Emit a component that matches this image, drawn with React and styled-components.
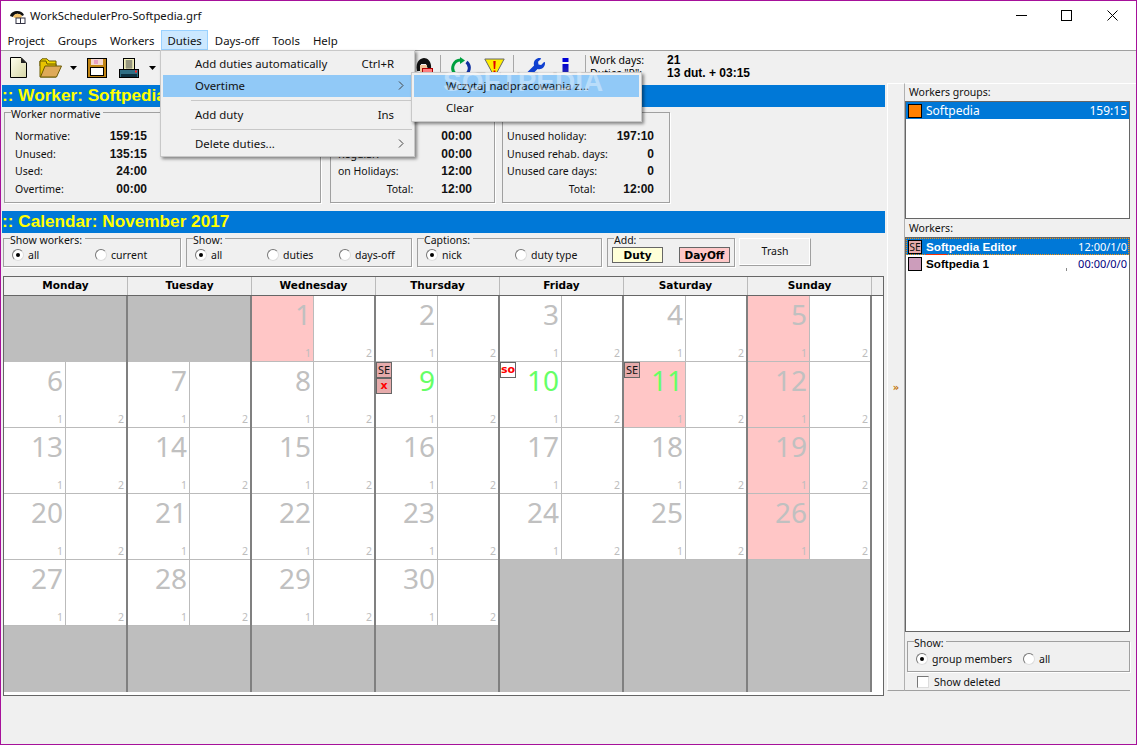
import React from "react";
import styled, { createGlobalStyle } from "styled-components";
import { FaWrench } from "react-icons/fa";

const GlobalStyle = createGlobalStyle`
  html, body {
    margin: 0;
    padding: 0;
    background: #f0f0f0;
  }
  body {
    font-family: "Noto Sans", "Open Sans", sans-serif;
    font-size: 10.5px;
    color: #000;
  }
`;

const Window = styled.div`
  position: relative;
  box-sizing: border-box;
  width: 1137px;
  height: 745px;
  border: 1px solid #a6119a;
  background: #f0f0f0;
  overflow: hidden;
  display: flex;
  flex-direction: column;
`;

const TitleBar = styled.div`
  height: 29px;
  background: #fff;
  display: flex;
  align-items: center;
  padding-left: 8px;
  font-size: 11.3px;
  flex: none;

  span {
    margin-left: 3px;
    flex: 1;
    color: #111;
  }
`;

const WinButtons = styled.div`
  display: flex;
  height: 100%;
  padding-right: 1px;
`;

const WinButton = styled.div`
  width: 45.5px;
  display: flex;
  align-items: center;
  justify-content: center;
  margin-top: -1px;
`;

const MenuBar = styled.div`
  height: 21px;
  background: #fff;
  display: flex;
  flex: none;
  border-bottom: 1px solid #a0a0a0;
  box-sizing: border-box;
  position: relative;
  z-index: 5;
`;

const MenuTitle = styled.div`
  position: relative;
  box-sizing: border-box;
  height: 20px;
  padding: 0 5.5px;
  font-size: 11.4px;
  line-height: 19px;
  color: #111;
  border: 1px solid ${p => (p.$open ? "#99d1ff" : "transparent")};
  background: ${p => (p.$open ? "#cce8ff" : "transparent")};
`;

const Dropdown = styled.div`
  position: absolute;
  box-sizing: border-box;
  top: 19px;
  left: -2px;
  width: 255px;
  height: 107px;
  padding: 2px;
  background: #f0f0f0;
  border: 1px solid #c8c8c8;
  box-shadow: 2px 2px 3px rgba(0, 0, 0, 0.45);
  z-index: 10;
`;

const SubMenu = styled(Dropdown)`
  top: -3px;
  left: 248px;
  width: 231px;
  height: 50px;
`;

const DropItem = styled.div`
  position: relative;
  box-sizing: border-box;
  display: flex;
  align-items: center;
  height: 22px;
  padding: 0 0 2px 32px;
  font-size: 11.4px;
  color: #111;
  background: ${p => (p.$active ? "#91c9f7" : "transparent")};

  b {
    flex: 1;
    font-weight: 400;
  }
`;

const ArrowSlot = styled.i`
  width: 18px;
  display: flex;
  padding-left: 4px;
  box-sizing: border-box;
`;

const DropLine = styled.div`
  height: 1px;
  margin: 3px 0 3px 28px;
  background: #c8c8c8;
`;

const Toolbar = styled.div`
  height: 33px;
  flex: none;
  display: flex;
  align-items: center;
  padding-left: 7px;
  position: relative;
`;

const ToolSlot = styled.div`
  width: ${p => p.$w}px;
  margin-left: ${p => p.$gap || 0}px;
  height: 22px;
  display: flex;
  align-items: center;
  justify-content: center;
  flex: none;
`;

const ToolSep = styled.div`
  width: 1px;
  height: 26px;
  background: #a8a8a8;
  margin-left: ${p => p.$gap}px;
  flex: none;
`;

const ToolStats = styled.div`
  margin: 3px 0 0 4px;
  align-self: flex-start;
  display: grid;
  grid-template-columns: 77px auto;
  grid-auto-rows: 13px;
  line-height: 13px;
`;

const Bold = styled.span`
  font-family: "DejaVu Sans", sans-serif;
  font-weight: 700;
  font-size: 10.5px;
`;

const Value = styled.span`
  font-family: "Liberation Sans", sans-serif;
  font-weight: 700;
  font-size: 12px;
`;

const Main = styled.div`
  flex: 1;
  display: flex;
  align-items: flex-start;
  min-height: 0;
`;

const LeftPane = styled.div`
  width: 884px;
  padding-left: 1px;
  box-sizing: border-box;
  flex: none;
`;

const BlueBar = styled.div`
  height: 22px;
  margin-top: ${p => p.$top}px;
  background: #0078d7;
  color: #ffff00;
  font-family: "Liberation Sans", sans-serif;
  font-weight: 700;
  font-size: 17.2px;
  line-height: 20px;
  white-space: nowrap;
  overflow: hidden;
`;

const PanelRow = styled.div`
  display: flex;
  margin: 5px 0 0 2px;
`;

const GroupBox = styled.div`
  position: relative;
  box-sizing: border-box;
  width: ${p => p.$w}px;
  height: ${p => p.$h}px;
  margin-left: ${p => p.$gap || 0}px;
  border: 1px solid #a0a0a0;
  box-shadow: 1px 1px 0 #fff;
  flex: none;
`;

const Legend = styled.span`
  position: absolute;
  top: -6px;
  left: 6px;
  padding-right: 3px;
  background: #f0f0f0;
  line-height: 14px;
  color: #111;
`;

const StatList = styled.div`
  padding: 15px ${p => p.$right}px 0 ${p => p.$left}px;
`;

const StatRow = styled.div`
  display: flex;
  justify-content: ${p => (p.$total ? "flex-end" : "space-between")};
  gap: ${p => (p.$total ? "28px" : "0")};
  height: 17.7px;
  line-height: 17.7px;
  color: #111;
`;

const FilterRow = styled.div`
  display: flex;
  margin: 5px 0 0 1px;
  align-items: flex-start;
`;

const FilterBody = styled.div`
  display: flex;
  align-items: center;
  padding: ${p => p.$top || 8}px 0 0 ${p => p.$left || 8}px;
`;

const RadioLabel = styled.label`
  display: flex;
  align-items: center;
  width: ${p => p.$w}px;
  height: 16px;
  color: #111;
  flex: none;
  gap: 4px;
`;

const RadioMark = styled.span`
  box-sizing: border-box;
  width: 12px;
  height: 12px;
  border-radius: 50%;
  background: #fff;
  border: 1px solid;
  border-color: #777 #ddd #ddd #777;
  display: flex;
  align-items: center;
  justify-content: center;
  flex: none;

  &::after {
    content: "";
    width: 4px;
    height: 4px;
    border-radius: 50%;
    background: ${p => (p.$on ? "#000" : "transparent")};
  }
`;

const AddChip = styled.div`
  box-sizing: border-box;
  width: 51px;
  height: 16px;
  margin-right: ${p => p.$gap || 0}px;
  border: 1px solid #666;
  background: ${p => p.$bg};
  text-align: center;
  line-height: 14px;
  flex: none;
`;

const TrashButton = styled.button`
  box-sizing: border-box;
  width: 72px;
  height: 28px;
  margin-left: 4px;
  padding: 0 0 2px;
  background: #f0f0f0;
  font: inherit;
  color: #111;
  border: 1px solid;
  border-color: #fff #a0a0a0 #a0a0a0 #fff;
  box-shadow: -1px -1px 0 #fff inset;
  flex: none;
`;

const Calendar = styled.div`
  box-sizing: border-box;
  width: 881px;
  height: 420px;
  margin: 9px 0 0 1px;
  border: 1px solid #666;
  background: #fff;
`;

const HeaderRow = styled.div`
  display: flex;
  height: 19px;
  background: #f0f0f0;
  border-bottom: 1px solid #666;
  box-sizing: border-box;
`;

const HeaderCell = styled.div`
  box-sizing: border-box;
  width: 124px;
  border-right: 1px solid #bbb;
  text-align: center;
  line-height: 17px;
  flex: none;
`;

const WeekRow = styled.div`
  display: grid;
  grid-template-columns: repeat(7, 124px);
  height: 66px;
`;

const DayCell = styled.div`
  position: relative;
  box-sizing: border-box;
  display: flex;
  border-right: 2px solid #808080;
  background: ${p => (p.$empty ? "#bebebe" : "#fff")};
`;

const HalfDay = styled.div`
  box-sizing: border-box;
  width: ${p => p.$w}px;
  display: flex;
  flex-direction: column;
  align-items: flex-end;
  justify-content: space-between;
  padding-right: 2px;
  background: ${p => (p.$off ? "#ffc6c6" : "transparent")};
  border-right: ${p => (p.$divider ? "1px solid #bbb" : "0")};
  border-bottom: 1px solid #bbb;
`;

const DayNumber = styled.div`
  font-size: 28px;
  line-height: 30px;
  margin-top: 3px;
  color: ${p => (p.$today ? "#66ff66" : "#c0c0c0")};
`;

const Slot = styled.div`
  font-size: 10.5px;
  line-height: 13px;
  margin-bottom: 1px;
  color: #bdbdbd;
  margin-left: auto;
`;

const ChipStack = styled.div`
  position: absolute;
  top: 0;
  left: 0;
  display: flex;
  flex-direction: column;
`;

const Chip = styled.div`
  box-sizing: border-box;
  width: 16px;
  height: 16px;
  border: 1px solid #666;
  background: ${p => (p.$white ? "#fff" : "#e6abab")};
  text-align: center;
  line-height: 14px;
  font-size: 11px;
  color: ${p => (p.$red ? "#ff0000" : "#111")};
  font-family: ${p => (p.$red ? '"DejaVu Sans", sans-serif' : "inherit")};
  font-weight: ${p => (p.$red ? 700 : 400)};
`;

const Splitter = styled.div`
  box-sizing: border-box;
  width: 18px;
  height: 608px;
  margin-left: 2px;
  margin-top: -1px;
  border-top: 1px solid #fff;
  border-left: 1px solid #fff;
  border-right: 1px solid #b0b0b0;
  border-bottom: 1px solid #a0a0a0;
  display: flex;
  align-items: center;
  justify-content: center;
  color: #c07000;
  font-family: "DejaVu Sans", sans-serif;
  font-weight: 700;
  font-size: 10px;
  flex: none;
`;

const RightPane = styled.div`
  box-sizing: border-box;
  width: 232px;
  height: 608px;
  margin-top: -1px;
  border-top: 1px solid #fff;
  padding: 1px 7px 0 0;
  display: flex;
  flex-direction: column;
  position: relative;
  flex: none;

  &::after {
    content: "";
    position: absolute;
    left: 0;
    bottom: 0;
    width: 225px;
    height: 1px;
    background: #a0a0a0;
  }
`;

const ListLabel = styled.div`
  height: ${p => p.$h}px;
  line-height: 14px;
  padding: ${p => p.$top}px 0 0 4px;
  box-sizing: border-box;
  color: #111;
`;

const ListBox = styled.div`
  box-sizing: border-box;
  height: ${p => (p.$h ? `${p.$h}px` : "auto")};
  flex: ${p => (p.$h ? "none" : "1")};
  border: 1px solid #666;
  background: #fff;
`;

const ListRow = styled.div`
  position: relative;
  box-sizing: border-box;
  height: 17px;
  display: flex;
  align-items: center;
  padding: 0 2px 0 2px;
  gap: 4px;
  background: ${p => (p.$sel ? "#0078d7" : "transparent")};
  color: ${p => (p.$sel ? "#fff" : "#000")};
  outline: ${p => (p.$focus ? "1px dotted #ff9000" : "none")};
  outline-offset: -1px;

  strong {
    flex: 1;
    font-weight: ${p => (p.$plain ? 400 : 700)};
    font-family: ${p => (p.$plain ? "inherit" : '"Liberation Sans", sans-serif')};
    font-size: ${p => (p.$plain ? "12px" : "11.7px")};
  }

  em {
    font-style: normal;
    font-size: ${p => (p.$plain ? "12px" : "11px")};
    color: ${p => p.$timeColor || "inherit"};
  }
`;

const Swatch = styled.span`
  box-sizing: border-box;
  width: 14px;
  height: 14px;
  border: 1px solid #000;
  background: ${p => p.$color};
  color: #111;
  font-size: 10.5px;
  line-height: 12px;
  text-align: center;
  overflow: hidden;
  flex: none;
`;

const Squiggle = styled.span`
  position: absolute;
  left: 20px;
  bottom: 0;
  width: 21px;
  height: 1px;
  background: #ff3000;
`;

const Tick = styled.span`
  position: absolute;
  left: 160px;
  bottom: 1px;
  width: 1px;
  height: 3px;
  background: #888;
`;

const ShowBox = styled(GroupBox)`
  margin: 9px 0 0 2px;
`;

const CheckRow = styled.label`
  display: flex;
  align-items: center;
  gap: 5px;
  height: 19px;
  margin: 0 0 0 12px;
  color: #111;
  flex: none;
`;

const CheckMark = styled.span`
  box-sizing: border-box;
  width: 12px;
  height: 12px;
  background: #fff;
  border: 1px solid;
  border-color: #777 #ddd #ddd #777;
`;

const Watermark = styled.div`
  position: absolute;
  top: 65px;
  left: 442px;
  font-family: "Liberation Sans", sans-serif;
  font-weight: 700;
  font-size: 28px;
  color: rgba(255, 255, 255, 0.38);
  pointer-events: none;
  z-index: 20;
`;

const Chevron = () => (
  <svg width="6" height="9" viewBox="0 0 6 9">
    <path d="M1 .5 5 4.5 1 8.5" fill="none" stroke="#444" />
  </svg>
);

const Caret = () => (
  <svg width="7" height="4" viewBox="0 0 7 4">
    <path d="M0 0H7L3.5 4Z" fill="#000" />
  </svg>
);

const AppIcon = () => (
  <svg width="18" height="16" viewBox="0 0 18 16">
    <path d="M1 8C2 2 13 1 15 7L13 8C10 5 6 5 4 9Z" fill="#111" />
    <path d="M4 9C6 5 10 5 13 8L12 10H6Z" fill="#f4c36a" />
    <rect x="7" y="10" width="9" height="5.5" fill="#fff" stroke="#334" />
    <path d="M11.5 10v5.5" stroke="#334" />
  </svg>
);

const DocIcon = () => (
  <svg width="17" height="21" viewBox="0 0 17 21">
    <defs>
      <linearGradient id="docFill" x1="0" y1="0" x2="1" y2="1">
        <stop offset="0" stopColor="#ffffee" />
        <stop offset="1" stopColor="#d6d6a6" />
      </linearGradient>
    </defs>
    <path d="M.5.5H11L16.5 6V20.5H.5Z" fill="url(#docFill)" stroke="#000" />
    <path d="M11 .5 16.5 6H11Z" fill="#222" />
  </svg>
);

const FolderIcon = () => (
  <svg width="23" height="20" viewBox="0 0 23 20">
    <path d="M1 3 3 .8H8L10 3H17V8H1Z" fill="#f0d800" stroke="#6b5a00" />
    <path d="M1 3V19H17V6H8L7 3Z" fill="#e8c400" stroke="#6b5a00" />
    <path d="M1.5 19 6 8H22.5L17.5 19Z" fill="#deaa58" stroke="#6b5a00" />
  </svg>
);

const FloppyIcon = () => (
  <svg width="20" height="20" viewBox="0 0 20 20">
    <rect x=".5" y=".5" width="19" height="19" fill="#c08414" stroke="#000" />
    <rect x="4" y="1" width="12" height="6" fill="#f6d8d0" />
    <rect x="7" y="2" width="4" height="4" fill="#e8a0c0" />
    <rect x="3.5" y="9.5" width="13" height="8" fill="#fff" stroke="#000" />
  </svg>
);

const PrinterIcon = () => (
  <svg width="20" height="20" viewBox="0 0 20 20">
    <rect x="4.5" y=".5" width="11" height="12" fill="#f0eeb8" stroke="#000" />
    <path d="M6.5 3h7M6.5 5h7M6.5 7h7M6.5 9h7M8 2v9M10 2v9M12 2v9" stroke="#555" strokeWidth=".7" />
    <rect x=".5" y="11.5" width="19" height="8" fill="#2f6e84" stroke="#000" />
    <rect x="2" y="16" width="16" height="3" fill="#0c3040" />
    <rect x="16" y="12.5" width="2" height="2" fill="#ff2020" />
  </svg>
);

const PersonIcon = () => (
  <svg width="18" height="22" viewBox="0 0 18 22">
    <path d="M2 14C0 4 6 1 9 1s8 3 7 11H13L11 7H6L5 14Z" fill="#111" />
    <path d="M5 8h7v8H5Z" fill="#f2c69a" />
    <rect x="7.5" y="11.5" width="10" height="7" fill="#ff8080" stroke="#b00000" />
  </svg>
);

const RefreshIcon = () => (
  <svg width="20" height="22" viewBox="0 0 20 22">
    <path d="M10 3A8 8 0 0 0 4.5 17" fill="none" stroke="#00a040" strokeWidth="3" />
    <path d="M10 19A8 8 0 0 0 15.5 5" fill="none" stroke="#1030a0" strokeWidth="3" />
    <path d="M9 0 14 3.5 9 7Z" fill="#00a040" />
    <path d="M11 15 6 18.5 11 22Z" fill="#1030a0" />
  </svg>
);

const WarnIcon = () => (
  <svg width="21" height="20" viewBox="0 0 21 20">
    <path d="M.8 1H20.2L10.5 19Z" fill="#ffee00" stroke="#666" />
    <path d="M9.3 3h2.4l-.5 8H9.8Z" fill="#e00000" />
    <rect x="9.5" y="12.5" width="2" height="2.4" fill="#e00000" />
  </svg>
);

const InfoIcon = () => (
  <svg width="7" height="20" viewBox="0 0 7 20">
    <defs>
      <linearGradient id="infoFill" x1="0" y1="0" x2="0" y2="1">
        <stop offset="0" stopColor="#0000d0" />
        <stop offset="1" stopColor="#4040a0" />
      </linearGradient>
    </defs>
    <rect width="6" height="4" x=".5" fill="#0000d8" />
    <rect width="6" height="14" x=".5" y="6" fill="url(#infoFill)" />
  </svg>
);

const MinIcon = () => (
  <svg width="11" height="11" viewBox="0 0 11 11">
    <path d="M0 5.5H11" stroke="#000" />
  </svg>
);

const MaxIcon = () => (
  <svg width="11" height="11" viewBox="0 0 11 11">
    <rect x=".5" y=".5" width="10" height="10" fill="none" stroke="#000" />
  </svg>
);

const CloseIcon = () => (
  <svg width="11" height="11" viewBox="0 0 11 11">
    <path d="M.5.5 10.5 10.5M10.5.5 .5 10.5" stroke="#000" />
  </svg>
);

const Radio = ({ w, on, children }) => (
  <RadioLabel $w={w}>
    <RadioMark $on={on} />
    {children}
  </RadioLabel>
);

const DAYS = ["Monday", "Tuesday", "Wednesday", "Thursday", "Friday", "Saturday", "Sunday"];

const d = (day, extra) => ({ day, ...extra });

const WEEKS = [
  [null, null, d(1, { off: true }), d(2), d(3), d(4), d(5, { off: true })],
  [
    d(6),
    d(7),
    d(8),
    d(9, { today: true, chips: [{ text: "SE" }, { text: "x", red: true }] }),
    d(10, { today: true, chips: [{ text: "so", red: true, white: true }] }),
    d(11, { today: true, off: true, chips: [{ text: "SE" }] }),
    d(12, { off: true }),
  ],
  [d(13), d(14), d(15), d(16), d(17), d(18), d(19, { off: true })],
  [d(20), d(21), d(22), d(23), d(24), d(25), d(26, { off: true })],
  [d(27), d(28), d(29), d(30), null, null, null],
  [null, null, null, null, null, null, null],
];

const PANELS = [
  {
    w: 317,
    legend: "Worker normative",
    left: 10,
    right: 173,
    rows: [
      ["Normative:", "159:15"],
      ["Unused:", "135:15"],
      ["Used:", "24:00"],
      ["Overtime:", "00:00"],
    ],
  },
  {
    w: 165,
    gap: 9,
    left: 7,
    right: 22,
    rows: [
      ["", "00:00"],
      ["Regular:", "00:00"],
      ["on Holidays:", "12:00"],
      ["Total:", "12:00", true],
    ],
  },
  {
    w: 168,
    gap: 7,
    left: 4,
    right: 15,
    rows: [
      ["Unused holiday:", "197:10"],
      ["Unused rehab. days:", "0"],
      ["Unused care days:", "0"],
      ["Total:", "12:00", true],
    ],
  },
];

const Day = ({ cell }) => {
  if (!cell) return <DayCell $empty />;
  return (
    <DayCell>
      <HalfDay $w={62} $off={cell.off} $divider>
        <DayNumber $today={cell.today}>{cell.day}</DayNumber>
        <Slot>1</Slot>
      </HalfDay>
      <HalfDay $w={60}>
        <span />
        <Slot>2</Slot>
      </HalfDay>
      {cell.chips && (
        <ChipStack>
          {cell.chips.map(chip => (
            <Chip key={chip.text} $red={chip.red} $white={chip.white}>
              {chip.text}
            </Chip>
          ))}
        </ChipStack>
      )}
    </DayCell>
  );
};

export default function App() {
  return (
    <>
      <GlobalStyle />
      <Window>
        <TitleBar>
          <AppIcon />
          <span>WorkSchedulerPro-Softpedia.grf</span>
          <WinButtons>
            <WinButton><MinIcon /></WinButton>
            <WinButton><MaxIcon /></WinButton>
            <WinButton><CloseIcon /></WinButton>
          </WinButtons>
        </TitleBar>

        <MenuBar>
          <MenuTitle>Project</MenuTitle>
          <MenuTitle>Groups</MenuTitle>
          <MenuTitle>Workers</MenuTitle>
          <MenuTitle $open>
            Duties
            <Dropdown>
              <DropItem>
                <b>Add duties automatically</b>
                <span>Ctrl+R</span>
                <ArrowSlot />
              </DropItem>
              <DropItem $active>
                <b>Overtime</b>
                <ArrowSlot><Chevron /></ArrowSlot>
                <SubMenu>
                  <DropItem $active><b>Wczytaj nadpracowania z...</b></DropItem>
                  <DropItem><b>Clear</b></DropItem>
                </SubMenu>
              </DropItem>
              <DropLine />
              <DropItem>
                <b>Add duty</b>
                <span>Ins</span>
                <ArrowSlot />
              </DropItem>
              <DropLine />
              <DropItem>
                <b>Delete duties...</b>
                <ArrowSlot><Chevron /></ArrowSlot>
              </DropItem>
            </Dropdown>
          </MenuTitle>
          <MenuTitle>Days-off</MenuTitle>
          <MenuTitle>Tools</MenuTitle>
          <MenuTitle>Help</MenuTitle>
        </MenuBar>

        <Toolbar>
          <ToolSlot $w={20}><DocIcon /></ToolSlot>
          <ToolSlot $w={24} $gap={10}><FolderIcon /></ToolSlot>
          <ToolSlot $w={11} $gap={6}><Caret /></ToolSlot>
          <ToolSlot $w={22} $gap={7}><FloppyIcon /></ToolSlot>
          <ToolSlot $w={22} $gap={10}><PrinterIcon /></ToolSlot>
          <ToolSlot $w={11} $gap={7}><Caret /></ToolSlot>
          <ToolSlot $w={18} $gap={257}><PersonIcon /></ToolSlot>
          <ToolSep $gap={7} />
          <ToolSlot $w={22} $gap={9}><RefreshIcon /></ToolSlot>
          <ToolSlot $w={22} $gap={11}><WarnIcon /></ToolSlot>
          <ToolSep $gap={8} />
          <ToolSlot $w={22} $gap={10}>
            <FaWrench size={20} color="#1040d0" />
          </ToolSlot>
          <ToolSlot $w={20} $gap={9}><InfoIcon /></ToolSlot>
          <ToolSep $gap={10} />
          <ToolStats>
            <span>Work days:</span>
            <Value>21</Value>
            <span>Duties "P":</span>
            <Value>13 dut. + 03:15</Value>
          </ToolStats>
        </Toolbar>

        <Main>
          <LeftPane>
            <BlueBar $top={1}>:: Worker: Softpedia Editor</BlueBar>
            <PanelRow>
              {PANELS.map((panel, p) => (
                <GroupBox key={p} $w={panel.w} $h={91} $gap={panel.gap}>
                  {panel.legend && <Legend>{panel.legend}</Legend>}
                  <StatList $left={panel.left} $right={panel.right}>
                    {panel.rows.map(([label, value, total], i) => (
                      <StatRow key={i} $total={total}>
                        <span>{label}</span>
                        <Value>{value}</Value>
                      </StatRow>
                    ))}
                  </StatList>
                </GroupBox>
              ))}
            </PanelRow>

            <BlueBar $top={8}>:: Calendar: November 2017</BlueBar>

            <FilterRow>
              <GroupBox $w={178} $h={29}>
                <Legend>Show workers:</Legend>
                <FilterBody>
                  <Radio w={83} on>all</Radio>
                  <Radio w={70}>current</Radio>
                </FilterBody>
              </GroupBox>
              <GroupBox $w={226} $h={29} $gap={5}>
                <Legend>Show:</Legend>
                <FilterBody>
                  <Radio w={72} on>all</Radio>
                  <Radio w={72}>duties</Radio>
                  <Radio w={70}>days-off</Radio>
                </FilterBody>
              </GroupBox>
              <GroupBox $w={185} $h={29} $gap={5}>
                <Legend>Captions:</Legend>
                <FilterBody>
                  <Radio w={89} on>nick</Radio>
                  <Radio w={80}>duty type</Radio>
                </FilterBody>
              </GroupBox>
              <GroupBox $w={128} $h={29} $gap={5}>
                <Legend>Add:</Legend>
                <FilterBody $left={4}>
                  <AddChip $bg="#ffffd8" $gap={16}><Bold>Duty</Bold></AddChip>
                  <AddChip $bg="#ffc8c8"><Bold>DayOff</Bold></AddChip>
                </FilterBody>
              </GroupBox>
              <TrashButton>Trash</TrashButton>
            </FilterRow>

            <Calendar>
              <HeaderRow>
                {DAYS.map(day => (
                  <HeaderCell key={day}><Bold>{day}</Bold></HeaderCell>
                ))}
              </HeaderRow>
              {WEEKS.map((week, i) => (
                <WeekRow key={i}>
                  {week.map((cell, j) => (
                    <Day key={j} cell={cell} />
                  ))}
                </WeekRow>
              ))}
            </Calendar>
          </LeftPane>

          <Splitter>»</Splitter>

          <RightPane>
            <ListLabel $h={16} $top={0}>Workers groups:</ListLabel>
            <ListBox $h={118}>
              <ListRow $sel $plain>
                <Swatch $color="#ff8000" />
                <strong>Softpedia</strong>
                <em>159:15</em>
              </ListRow>
            </ListBox>
            <ListLabel $h={18} $top={2}>Workers:</ListLabel>
            <ListBox>
              <ListRow $sel $focus>
                <Swatch $color="#e6abab">SE</Swatch>
                <strong>Softpedia Editor</strong>
                <em>12:00/1/0</em>
                <Squiggle />
              </ListRow>
              <ListRow $timeColor="#000080">
                <Swatch $color="#cc9dbb" />
                <strong>Softpedia 1</strong>
                <em>00:00/0/0</em>
                <Tick />
              </ListRow>
            </ListBox>
            <ShowBox $w={223} $h={31}>
              <Legend>Show:</Legend>
              <FilterBody $top={9}>
                <Radio w={107} on>group members</Radio>
                <Radio w={40}>all</Radio>
              </FilterBody>
            </ShowBox>
            <CheckRow>
              <CheckMark />
              Show deleted
            </CheckRow>
          </RightPane>
        </Main>

        <Watermark>SOFTPEDIA</Watermark>
      </Window>
    </>
  );
}
